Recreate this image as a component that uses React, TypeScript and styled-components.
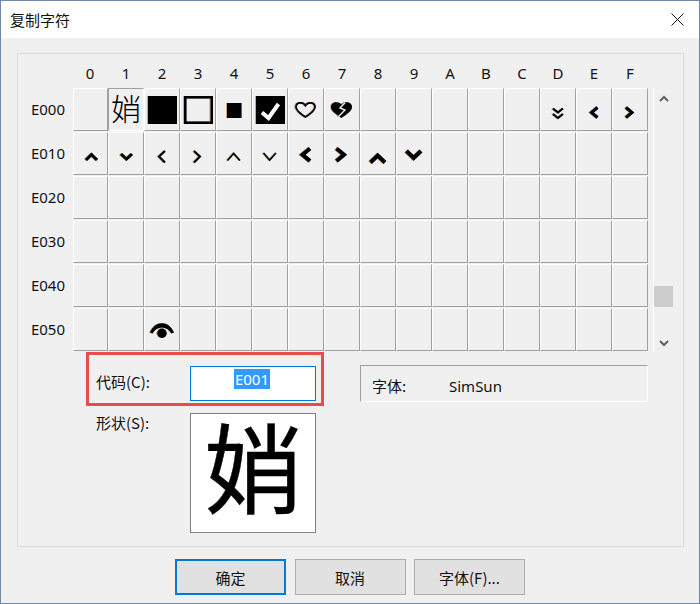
import React from 'react';
import styled, { createGlobalStyle } from 'styled-components';

const GlobalStyle = createGlobalStyle`
  html, body {
    margin: 0;
    padding: 0;
    background: #f0f0f0;
  }
  * {
    box-sizing: border-box;
  }
`;

const Dialog = styled.div`
  width: 700px;
  height: 604px;
  display: flex;
  flex-direction: column;
  background: #f0f0f0;
  border: 1px solid #6d8aa8;
  font-family: "Noto Sans CJK SC", "Noto Sans", sans-serif;
  font-size: 15px;
  color: #111;
`;

const TitleBar = styled.div`
  height: 37px;
  flex: none;
  background: #fff;
  display: flex;
  align-items: center;
  justify-content: space-between;
  padding: 0 15px 1px 9px;
`;

const Body = styled.div`
  flex: 1;
  display: flex;
  flex-direction: column;
  padding: 15px 15px 0 16px;
`;

const Panel = styled.div`
  height: 494px;
  flex: none;
  border: 1px solid #dcdcdc;
  display: flex;
  flex-direction: column;
`;

const HeaderRow = styled.div`
  height: 34px;
  flex: none;
  display: grid;
  grid-template-columns: repeat(16, 36px);
  margin-left: 54px;
  padding-top: 9px;
  line-height: 20px;
  font-family: "Noto Sans", sans-serif;
`;

const HeaderCell = styled.div`
  text-align: center;
`;

const GridArea = styled.div`
  display: flex;
  height: 264px;
  flex: none;
`;

const RowLabels = styled.div`
  width: 54px;
  flex: none;
  display: grid;
  grid-auto-rows: 44px;
`;

const RowLabel = styled.div`
  font-family: "Noto Sans", sans-serif;
  line-height: 42px;
  text-align: right;
  padding-right: 7px;
`;

const Cells = styled.div`
  display: grid;
  grid-template-columns: repeat(16, 36px);
  grid-auto-rows: 44px;
  flex: none;
`;

const Cell = styled.div<{ $selected?: boolean; $first?: boolean }>`
  display: flex;
  align-items: flex-start;
  justify-content: flex-start;
  margin-left: ${p => (p.$first ? 1 : 0)}px;
  height: 43px;
  border-style: solid;
  border-width: 1px;
  border-color: ${p =>
    p.$selected ? '#a0a0a0 #fff #fff #a0a0a0' : '#fff #a0a0a0 #a0a0a0 #fff'};
`;

const SmallGlyph = styled.span`
  width: 34px;
  text-align: center;
  font-size: 30px;
  font-weight: 300;
  line-height: 36px;
  color: #000;
`;

const IconSvg = styled.svg`
  display: block;
  flex: none;
  filter: drop-shadow(-0.5px 0 0 rgba(255, 140, 0, 0.55)) drop-shadow(0.5px 0 0 rgba(0, 120, 255, 0.6));
`;

const Scrollbar = styled.div`
  width: 20px;
  flex: none;
  margin-left: 5px;
  height: 264px;
  border-left: 1px solid #fff;
  position: relative;
`;

const ScrollArrow = styled.svg<{ $down?: boolean }>`
  position: absolute;
  left: 5px;
  ${p => (p.$down ? 'bottom: 5px;' : 'top: 7px;')}
`;

const ScrollThumb = styled.div`
  position: absolute;
  left: 0;
  top: 198px;
  width: 19px;
  height: 21px;
  background: #cdcdcd;
`;

const Lower = styled.div`
  display: flex;
`;

const LowerLeft = styled.div`
  width: 342px;
  flex: none;
  display: flex;
  flex-direction: column;
  padding-left: 68px;
`;

const CodeBox = styled.div`
  width: 238px;
  height: 54px;
  border: 3px solid #ea4c4c;
  display: flex;
  align-items: flex-start;
  padding: 11px 0 0 7px;
`;

const FieldLabel = styled.div`
  width: 94px;
  flex: none;
  line-height: 20px;
`;

const CodeLabel = styled(FieldLabel)`
  margin-top: 6px;
`;

const CodeInput = styled.div`
  width: 126px;
  height: 35px;
  background: #fff;
  border: 1px solid #0078d7;
  display: flex;
  align-items: flex-start;
  justify-content: center;
  padding: 2px 2px 0 0;
  font-family: "Noto Sans", sans-serif;
`;

const Selected = styled.span`
  background: #3399ff;
  color: #fff;
  line-height: 20px;
  padding: 0 1px;
`;

const ShapeRow = styled.div`
  display: flex;
  margin-top: 7px;
  padding-left: 10px;
`;

const ShapeBox = styled.div`
  width: 126px;
  height: 120px;
  background: #fff;
  border: 1px solid #808080;
  display: flex;
  align-items: center;
  justify-content: center;
  padding-bottom: 20px;
`;

const LargeGlyph = styled.span`
  font-size: 98px;
  line-height: 98px;
  color: #000;
  -webkit-text-stroke: 0.4px #000;
`;

const FontBox = styled.div`
  width: 288px;
  height: 37px;
  margin-top: 13px;
  border-style: solid;
  border-width: 1px;
  border-color: #a0a0a0 #fff #fff #a0a0a0;
  display: flex;
  align-items: center;
  padding: 4px 0 0 11px;
`;

const FontLabel = styled.span`
  width: 77px;
  flex: none;
`;

const FontValue = styled.span`
  font-family: "Noto Sans", sans-serif;
`;

const Footer = styled.div`
  display: flex;
  gap: 8.5px;
  padding-left: 158px;
  margin-top: 12px;
`;

const Button = styled.div<{ $primary?: boolean }>`
  width: 111px;
  height: 36px;
  background: #e1e1e1;
  border: ${p => (p.$primary ? '2px solid #0078d7' : '1px solid #adadad')};
  display: flex;
  align-items: center;
  justify-content: center;
`;

const Canvas: React.FC<{ children: React.ReactNode }> = ({ children }) => (
  <IconSvg width="34" height="41" viewBox="0 0 34 41">
    {children}
  </IconSvg>
);

const Chevron: React.FC<{ d: string; sw: number }> = ({ d, sw }) => (
  <Canvas>
    <path d={d} fill="none" stroke="#000" strokeWidth={sw} />
  </Canvas>
);

const columns = '0123456789ABCDEF'.split('');
const rows = ['E000', 'E010', 'E020', 'E030', 'E040', 'E050'];

const icons: Record<string, React.ReactNode> = {
  'E000-1': <SmallGlyph>娋</SmallGlyph>,
  'E000-2': (
    <Canvas>
      <rect x="3" y="7" width="29" height="28" fill="#000" />
    </Canvas>
  ),
  'E000-3': (
    <Canvas>
      <rect x="4.25" y="8.25" width="26.5" height="25.5" fill="none" stroke="#000" strokeWidth="2.5" />
    </Canvas>
  ),
  'E000-4': (
    <Canvas>
      <rect x="10" y="14" width="14.5" height="15" fill="#000" />
    </Canvas>
  ),
  'E000-5': (
    <Canvas>
      <rect x="3" y="7" width="29" height="28" fill="#000" />
      <path d="M9 23.5l6.5 5.5L25.5 15" fill="none" stroke="#fff" strokeWidth="4" />
    </Canvas>
  ),
  'E000-6': (
    <Canvas>
      <path
        d="M16.5 28 C11 24.5 7 21.5 7 18 C7 13 14 12.5 16.5 16.5 C19 12.5 26 13 26 18 C26 21.5 22 24.5 16.5 28Z"
        fill="none"
        stroke="#000"
        strokeWidth="1.7"
      />
    </Canvas>
  ),
  'E000-7': (
    <Canvas>
      <path
        d="M16.5 29 C11 25 6 22 6 18 C6 12.5 13.5 12 16.5 15.5 C19.5 12 27 12.5 27 18 C27 22 22 25 16.5 29Z"
        fill="#000"
      />
      <path d="M20 13.7L15 19l5 2-6.5 6.5" fill="none" stroke="#f0f0f0" strokeWidth="1.4" />
    </Canvas>
  ),
  'E000-D': <Chevron d="M12 19.5l5 4 5-4M12 25l5 4 5-4" sw={2} />,
  'E000-E': <Chevron d="M20.5 18.5L14.5 23.5l6 5" sw={3} />,
  'E000-F': <Chevron d="M13 18.5l6 5-6 5" sw={3} />,
  'E010-0': <Chevron d="M12 27l5.5-5.5L23 27" sw={3} />,
  'E010-1': <Chevron d="M12 21l5.5 5 5.5-5" sw={3} />,
  'E010-2': <Chevron d="M20 18l-6 5.5 6 6" sw={2} />,
  'E010-3': <Chevron d="M13 18l6 5.5-6 6" sw={2} />,
  'E010-4': <Chevron d="M10.5 27.5l6.2-7 6.3 7" sw={1.5} />,
  'E010-5': <Chevron d="M10.5 20l6.2 7 6.3-7" sw={1.5} />,
  'E010-6': <Chevron d="M21 15.5l-7.5 6.2 7.5 6.3" sw={4} />,
  'E010-7': <Chevron d="M11.5 15.5l7.5 6.2-7.5 6.3" sw={4} />,
  'E010-8': <Chevron d="M9.5 29.5l7.2-7 7.3 7" sw={4} />,
  'E010-9': <Chevron d="M9.5 18l7.2 7 7.3-7" sw={4} />,
  'E050-2': (
    <Canvas>
      <path d="M5 23.5 C10 11 24 11 29 23.5 L26.5 24.5 C22.5 16.5 11.5 16.5 7.5 24.5Z" fill="#000" />
      <circle cx="17" cy="24.3" r="4.7" fill="#000" />
    </Canvas>
  ),
};

const App: React.FC = () => (
  <>
    <GlobalStyle />
    <Dialog>
      <TitleBar>
        <span>复制字符</span>
        <svg width="13" height="13" viewBox="0 0 13 13">
          <path d="M.5.5l12 12M12.5.5l-12 12" stroke="#111" strokeWidth="1" fill="none" />
        </svg>
      </TitleBar>
      <Body>
        <Panel>
          <HeaderRow>
            {columns.map(c => (
              <HeaderCell key={c}>{c}</HeaderCell>
            ))}
          </HeaderRow>
          <GridArea>
            <RowLabels>
              {rows.map(r => (
                <RowLabel key={r}>{r}</RowLabel>
              ))}
            </RowLabels>
            <Cells>
              {rows.map(r =>
                columns.map((c, i) => (
                  <Cell key={r + c} $first={i === 0} $selected={r === 'E000' && c === '1'}>
                    {icons[`${r}-${c}`]}
                  </Cell>
                ))
              )}
            </Cells>
            <Scrollbar>
              <ScrollArrow width="10" height="8" viewBox="0 0 10 8">
                <path d="M1 6l4-4 4 4" fill="none" stroke="#606060" strokeWidth="2" />
              </ScrollArrow>
              <ScrollThumb />
              <ScrollArrow $down width="10" height="8" viewBox="0 0 10 8">
                <path d="M1 2l4 4 4-4" fill="none" stroke="#606060" strokeWidth="2" />
              </ScrollArrow>
            </Scrollbar>
          </GridArea>
          <Lower>
            <LowerLeft>
              <CodeBox>
                <CodeLabel>代码(C):</CodeLabel>
                <CodeInput>
                  <Selected>E001</Selected>
                </CodeInput>
              </CodeBox>
              <ShapeRow>
                <FieldLabel>形状(S):</FieldLabel>
                <ShapeBox>
                  <LargeGlyph>娋</LargeGlyph>
                </ShapeBox>
              </ShapeRow>
            </LowerLeft>
            <FontBox>
              <FontLabel>字体:</FontLabel>
              <FontValue>SimSun</FontValue>
            </FontBox>
          </Lower>
        </Panel>
        <Footer>
          <Button $primary>确定</Button>
          <Button>取消</Button>
          <Button>字体(F)...</Button>
        </Footer>
      </Body>
    </Dialog>
  </>
);

export default App;
